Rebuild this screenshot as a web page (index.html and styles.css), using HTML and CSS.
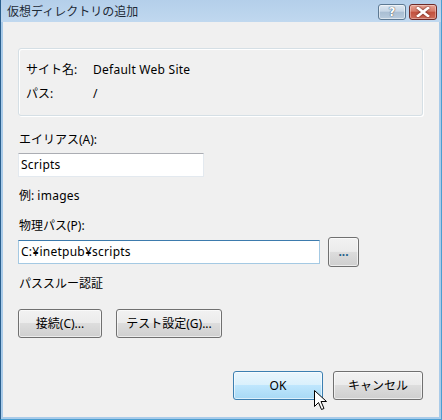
FILE: index.html
```html
<!DOCTYPE html>
<html lang="ja">
<head>
<meta charset="utf-8">
<link rel="stylesheet" href="styles.css">
</head>
<body>
<div class="window">
  <div class="titlebar">
    <div class="title">仮想ディレクトリの追加</div>
    <div class="caption-buttons">
      <div class="cap-btn help"><span>?</span></div>
      <div class="cap-btn close">
        <svg width="14" height="10" viewBox="0 0 14 10"><path d="M2 1 L12 9 M12 1 L2 9" stroke="#fff" stroke-width="2.6" stroke-linecap="square"/></svg>
      </div>
    </div>
  </div>
  <div class="content">
    <div class="group">
      <div class="info-row"><span class="info-label">サイト名:</span><span class="info-value latin">Default Web Site</span></div>
      <div class="info-row"><span class="info-label">パス:</span><span class="info-value">/</span></div>
    </div>
    <div class="label alias-label">エイリアス(A):</div>
    <div class="textbox alias-box latin">Scripts</div>
    <div class="label example">例: <span class="latin">images</span></div>
    <div class="label path-label">物理パス(P):</div>
    <div class="path-row">
      <div class="textbox path-box focused latin">C:¥inetpub¥scripts</div>
      <div class="btn browse"><span class="dots">...</span></div>
    </div>
    <div class="label passthru">パススルー認証</div>
    <div class="btn-row">
      <div class="btn connect">接続(C)...</div>
      <div class="btn test">テスト設定(G)...</div>
    </div>
    <div class="footer">
      <div class="btn dialog-btn ok">OK
        <svg class="cursor" width="14" height="22" viewBox="0 0 14 22"><path d="M0.5 0.5 L0.5 16.5 L4.5 12.5 L7.5 19.5 L10 18.5 L7 11.5 L12.5 11.5 Z" fill="#fff" stroke="#000" stroke-width="1" stroke-linejoin="miter"/></svg>
      </div>
      <div class="btn dialog-btn">キャンセル</div>
    </div>
  </div>
</div>
</body>
</html>
```
FILE: styles.css
```css
html, body {
  margin: 0;
  padding: 0;
  background: #f0f0f0;
}
body {
  font-family: "Noto Sans", "Noto Sans CJK JP", sans-serif;
  font-size: 12px;
  color: #000;
}
.latin { letter-spacing: 0.25px; }
.window {
  width: 442px;
  height: 420px;
  box-sizing: border-box;
  border-left: 1px solid #2a5f8e;
  border-right: 1px solid #4b9ed1;
  border-bottom: 1px solid #4b9ed1;
  background: #a9cbe9;
  padding: 0 2px 2px 2px;
  display: flex;
  flex-direction: column;
}
.titlebar {
  height: 22px;
  flex: none;
  display: flex;
  align-items: flex-start;
  justify-content: space-between;
  background: linear-gradient(#b4cfea, #c0d8ef);
  margin: 0 -2px;
  padding: 0 4px 0 6px;
}
.title {
  font-family: "Noto Sans CJK JP", sans-serif;
  font-size: 12px;
  line-height: 20px;
  color: #1e2a36;
  padding-top: 1px;
}
.caption-buttons {
  display: flex;
  gap: 3px;
  padding-top: 4px;
}
.cap-btn {
  width: 26px;
  height: 14px;
  border: 1px solid #5d7993;
  border-radius: 3px;
  display: flex;
  align-items: center;
  justify-content: center;
}
.help {
  background: linear-gradient(#dfe8f1 0%, #c6d6e6 45%, #a9bed3 50%, #b8cbdd 100%);
  box-shadow: inset 0 0 0 1px rgba(255,255,255,0.5);
}
.help span {
  font-family: "DejaVu Sans", sans-serif;
  font-weight: bold;
  font-size: 12px;
  color: #fff;
  text-shadow: 0 0 1px #3a4a5c, 0 0 1px #3a4a5c;
  line-height: 12px;
}
.close {
  border-color: #6e2a27;
  background: linear-gradient(#e8a394 0%, #d67a68 45%, #c2503d 50%, #cf6d5a 100%);
  box-shadow: inset 0 0 0 1px rgba(255,255,255,0.35);
}
.close svg { filter: drop-shadow(0 0 1px #5a1b14); }
.content {
  flex: 1;
  background: #f0f0f0;
  padding: 26px 0 0 15px;
  position: relative;
}
.group {
  width: 405px;
  height: 68px;
  box-sizing: border-box;
  border: 1px solid #d5dfe5;
  border-radius: 3px;
  box-shadow: inset 1px 1px 0 #fff, 1px 1px 0 #fff;
  padding: 12px 0 0 7px;
  display: flex;
  flex-direction: column;
  gap: 7px;
}
.info-row {
  display: flex;
  line-height: 17px;
  height: 17px;
}
.info-label { width: 67px; }
.label {
  line-height: 17px;
  padding-left: 1px;
}
.alias-label { margin-top: 15px; }
.textbox {
  box-sizing: border-box;
  height: 24px;
  background: #fff;
  border: 1px solid #e3e9ef;
  border-top-color: #abadb3;
  line-height: 21px;
  padding-left: 2px;
  margin-top: 5px;
}
.alias-box { width: 186px; }
.example { margin-top: 10px; }
.path-label { margin-top: 13px; }
.path-row {
  display: flex;
  align-items: center;
  gap: 8px;
  margin-top: 3px;
}
.path-box { width: 302px; margin-top: 0; }
.focused {
  border-color: #a4c9e3;
  border-top-color: #3d7bad;
}
.btn {
  box-sizing: border-box;
  border: 1px solid #707070;
  border-radius: 3px;
  background: linear-gradient(#f2f2f2 0%, #ebebeb 48%, #dddddd 50%, #cfcfcf 100%);
  box-shadow: inset 0 0 0 1px rgba(255,255,255,0.6);
  display: flex;
  align-items: center;
  justify-content: center;
  line-height: 17px;
}
.browse {
  width: 31px;
  height: 30px;
}
.dots {
  color: #1d5f8a;
  font-weight: bold;
  position: relative;
  top: -1px;
}
.passthru { margin-top: 8px; }
.btn-row {
  display: flex;
  gap: 14px;
  margin-top: 17px;
}
.connect { width: 84px; height: 29px; }
.test { width: 106px; height: 29px; }
.footer {
  display: flex;
  gap: 10px;
  margin-top: 33px;
  padding-left: 215px;
}
.dialog-btn {
  width: 90px;
  height: 29px;
  position: relative;
}
.ok {
  border-color: #3c7fb1;
  background: linear-gradient(#eaf6fd 0%, #d9f0fc 48%, #bee6fd 50%, #a7d9f5 100%);
}
.cursor {
  position: absolute;
  left: 80px;
  top: 18px;
}
```
